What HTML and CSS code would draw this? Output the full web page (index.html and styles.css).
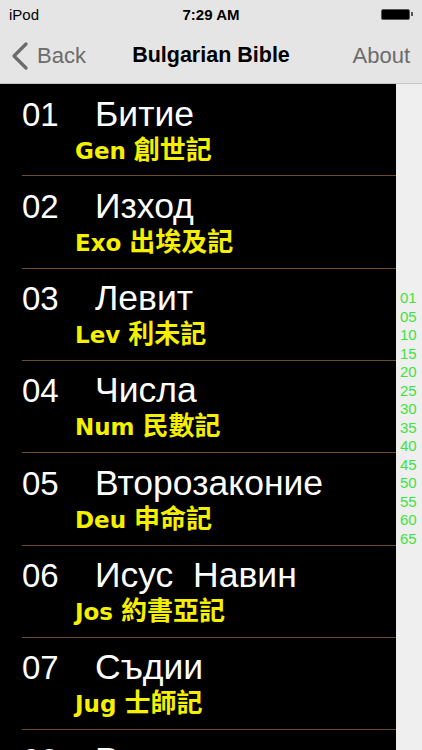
FILE: index.html
```html
<!DOCTYPE html>
<html>
<head>
<meta charset="utf-8">
<link rel="stylesheet" href="styles.css">
</head>
<body>
<div class="screen">
  <div class="status">
    <span class="carrier">iPod</span>
    <span class="time">7:29 AM</span>
    <span class="battery"><span class="cell"></span><span class="tip"></span></span>
  </div>
  <div class="nav">
    <div class="back">
      <svg width="18" height="28" viewBox="0 0 18 28"><path d="M15 2 L3 14 L15 26" fill="none" stroke="#6b6b6b" stroke-width="3.2" stroke-linecap="round" stroke-linejoin="round"/></svg>
      <span>Back</span>
    </div>
    <div class="title">Bulgarian Bible</div>
    <div class="about">About</div>
  </div>
  <div class="main">
    <div class="list">
      <div class="row"><div class="top"><span class="num">01</span><span class="name">Битие</span></div><div class="sub">Gen <span class="cjk">創世記</span></div></div>
      <div class="row"><div class="top"><span class="num">02</span><span class="name">Изход</span></div><div class="sub">Exo <span class="cjk">出埃及記</span></div></div>
      <div class="row"><div class="top"><span class="num">03</span><span class="name">Левит</span></div><div class="sub">Lev <span class="cjk">利未記</span></div></div>
      <div class="row"><div class="top"><span class="num">04</span><span class="name">Числа</span></div><div class="sub">Num <span class="cjk">民數記</span></div></div>
      <div class="row"><div class="top"><span class="num">05</span><span class="name">Второзаконие</span></div><div class="sub">Deu <span class="cjk">申命記</span></div></div>
      <div class="row"><div class="top"><span class="num">06</span><span class="name">Исус&nbsp; Навин</span></div><div class="sub">Jos <span class="cjk">約書亞記</span></div></div>
      <div class="row"><div class="top"><span class="num">07</span><span class="name">Съдии</span></div><div class="sub">Jug <span class="cjk">士師記</span></div></div>
      <div class="row"><div class="top"><span class="num">08</span><span class="name">Рут</span></div><div class="sub">Rut <span class="cjk">路得記</span></div></div>
    </div>
    <div class="index">
      <span>01</span><span>05</span><span>10</span><span>15</span><span>20</span><span>25</span><span>30</span><span>35</span><span>40</span><span>45</span><span>50</span><span>55</span><span>60</span><span>65</span>
    </div>
  </div>
</div>
</body>
</html>
```
FILE: styles.css
```css
html, body {
  margin: 0;
  padding: 0;
  width: 422px;
  height: 750px;
  overflow: hidden;
  background: #000;
}
.screen {
  width: 422px;
  height: 750px;
  display: flex;
  flex-direction: column;
  overflow: hidden;
  font-family: "Liberation Sans", Arial, sans-serif;
}
.status {
  height: 28px;
  background: #e5e5e5;
  display: flex;
  align-items: center;
  justify-content: space-between;
  padding: 0 9px 0 9px;
  position: relative;
  font-size: 15px;
  color: #000;
}
.time {
  position: absolute;
  left: 0;
  right: 0;
  text-align: center;
  font-weight: bold;
  pointer-events: none;
}
.battery {
  display: flex;
  align-items: center;
}
.cell {
  width: 27px;
  height: 9px;
  background: #000;
  border: 1px solid #555;
  border-radius: 2px;
}
.tip {
  width: 2px;
  height: 4px;
  background: #555;
  margin-left: 1px;
}
.nav {
  height: 55px;
  background: #e5e5e5;
  border-bottom: 1px solid #c4c4c4;
  display: flex;
  align-items: center;
  justify-content: space-between;
  position: relative;
  padding: 0 12px 0 11px;
}
.back {
  display: flex;
  align-items: center;
  gap: 8px;
  color: #6b6b6b;
  font-size: 22px;
}
.back svg { display: block; }
.title {
  position: absolute;
  left: 0;
  right: 0;
  text-align: center;
  font-weight: bold;
  font-size: 21.5px;
  color: #000;
  pointer-events: none;
}
.about {
  color: #6b6b6b;
  font-size: 22px;
}
.main {
  flex: 1;
  display: flex;
  min-height: 0;
}
.list {
  width: 396px;
  background: #000;
  overflow: hidden;
}
.row {
  height: 91.33px;
  margin-left: 22px;
  border-bottom: 1px solid #6e4b2b;
  box-sizing: content-box;
}
.top {
  display: flex;
  align-items: baseline;
  padding-top: 9.5px;
  color: #fff;
  font-size: 35.5px;
  line-height: 41px;
}
.num {
  width: 73px;
  font-size: 33px;
}
.sub {
  margin-left: 53px;
  color: #f5f000;
  font-family: "DejaVu Sans", "Noto Sans CJK TC", sans-serif;
  font-weight: bold;
  font-size: 23px;
  line-height: 26px;
}
.cjk {
  font-family: "Noto Sans CJK TC", sans-serif;
  font-size: 26px;
  line-height: 26px;
}
.index {
  flex: 1;
  background: #efefef;
  display: flex;
  flex-direction: column;
  align-items: flex-start;
  padding-top: 205px;
  padding-left: 4px;
  color: #3fe33f;
  font-family: "Liberation Sans", Arial, sans-serif;
  font-size: 15px;
  line-height: 18.5px;
}
```
